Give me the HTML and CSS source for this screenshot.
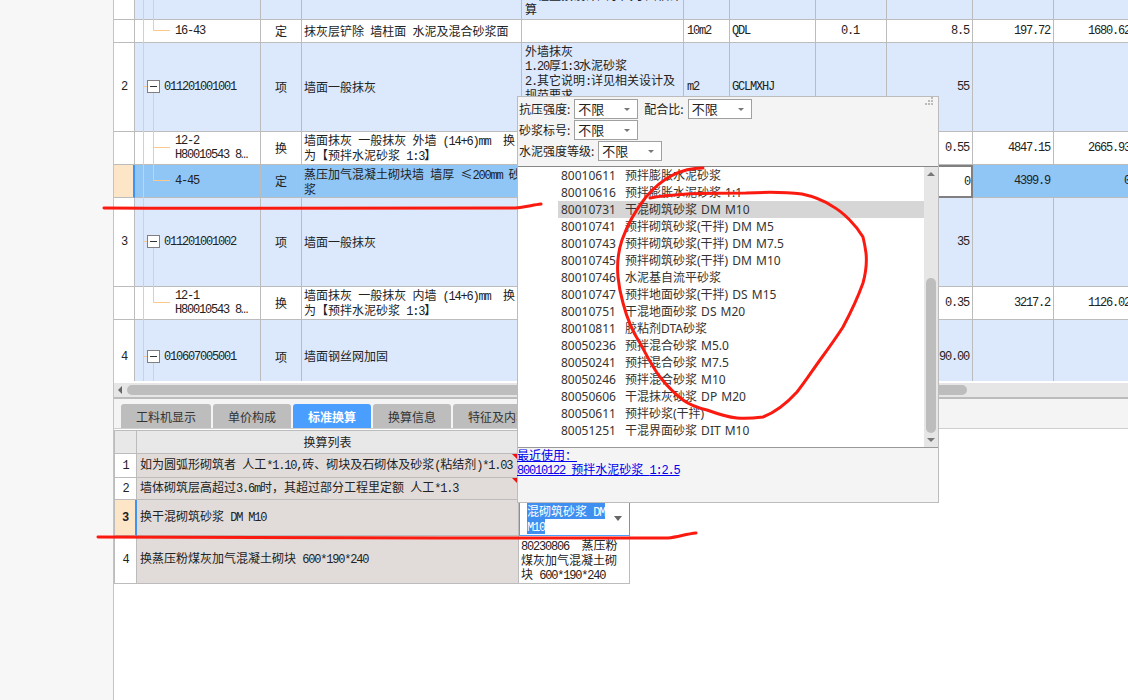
FILE: index.html
```html
<!DOCTYPE html>
<html lang="zh-CN">
<head>
    <meta charset="UTF-8">
    <title>分部分项</title>
    <link rel="stylesheet" href="styles.css">
</head>
<body>
<div class="app">
    <div class="bill-wrap">
        <table class="bill">
            <colgroup>
                <col class="c-no"><col class="c-code"><col class="c-type"><col class="c-name"><col class="c-feat">
                <col class="c-unit"><col class="c-expr"><col class="c-rate"><col class="c-qty"><col class="c-price"><col class="c-total">
            </colgroup>
            <tr class="r-clip item">
                <td class="no"></td><td></td><td></td><td></td>
                <td><div class="clip">工程量按设计图示尺寸面积计<br>算</div></td>
                <td></td><td></td><td></td><td></td><td></td><td></td>
            </tr>
            <tr class="r-sub">
                <td class="no"></td>
                <td class="code lv2 en">16-43</td>
                <td class="type">定</td>
                <td class="name">抹灰层铲除 墙柱面 水泥及混合砂浆面</td>
                <td></td>
                <td class="unit en">10m2</td>
                <td class="expr en">QDL</td>
                <td class="ctr en">0.1</td>
                <td class="num en">8.5</td>
                <td class="num en">197.72</td>
                <td class="num en">1680.62</td>
            </tr>
            <tr class="r-item item">
                <td class="no en">2</td>
                <td class="code lv1 en">011201001001</td>
                <td class="type">项</td>
                <td class="name">墙面一般抹灰</td>
                <td class="feat">外墙抹灰<br><span class="en">1.20</span>厚<span class="en">1:3</span>水泥砂浆<br><span class="en">2.</span>其它说明<span class="en">:</span>详见相关设计及<br>规范要求</td>
                <td class="unit en">m2</td>
                <td class="expr en">GCLMXHJ</td>
                <td></td>
                <td class="num en">55</td>
                <td></td><td></td>
            </tr>
            <tr class="r-two">
                <td class="no"></td>
                <td class="code lv2 en">12-2<br>H80010543 8…</td>
                <td class="type">换</td>
                <td class="name">墙面抹灰 一般抹灰 外墙 <span class="en">(14+6)mm</span>&nbsp; 换<br>为【预拌水泥砂浆 <span class="en">1:3</span>】</td>
                <td></td><td></td><td></td><td></td>
                <td class="num en">0.55</td>
                <td class="num en">4847.15</td>
                <td class="num en">2665.93</td>
            </tr>
            <tr class="r-two current">
                <td class="no"></td>
                <td class="code lv2 en">4-45</td>
                <td class="type">定</td>
                <td class="name">蒸压加气混凝土砌块墙 墙厚 ≤<span class="en">200mm</span> 砂<br>浆</td>
                <td></td><td></td><td></td><td></td>
                <td class="num en editing">0</td>
                <td class="num en">4399.9</td>
                <td class="num en">0</td>
            </tr>
            <tr class="r-item item">
                <td class="no en">3</td>
                <td class="code lv1 en">011201001002</td>
                <td class="type">项</td>
                <td class="name">墙面一般抹灰</td>
                <td></td><td></td><td></td><td></td>
                <td class="num en">35</td>
                <td></td><td></td>
            </tr>
            <tr class="r-two">
                <td class="no"></td>
                <td class="code lv2 en">12-1<br>H80010543 8…</td>
                <td class="type">换</td>
                <td class="name">墙面抹灰 一般抹灰 内墙 <span class="en">(14+6)mm</span>&nbsp; 换<br>为【预拌水泥砂浆 <span class="en">1:3</span>】</td>
                <td></td><td></td><td></td><td></td>
                <td class="num en">0.35</td>
                <td class="num en">3217.2</td>
                <td class="num en">1126.02</td>
            </tr>
            <tr class="r-last item">
                <td class="no en">4</td>
                <td class="code lv1 en">010607005001</td>
                <td class="type">项</td>
                <td class="name">墙面钢丝网加固</td>
                <td></td><td></td><td></td><td></td>
                <td class="num en">90.00</td>
                <td></td><td></td>
            </tr>
        </table>

        <!-- tree connectors, viewBox is in page coordinates -->
        <svg class="tree" width="146" height="381" viewBox="114 0 146 381">
            <g stroke="#fcc98d" fill="none">
                <path d="M143.5 0V381"/>
                <path d="M153.5 0V30.5H170"/>
                <path d="M143.5 86.5H147M153.5 92V180.5H170M153.5 147.5H170"/>
                <path d="M143.5 241.5H147M153.5 247V302.5H170"/>
                <path d="M143.5 356.5H147M153.5 362V381"/>
            </g>
            <g fill="#fff" stroke="#808080">
                <rect x="147.5" y="80.5" width="12" height="12"/>
                <rect x="147.5" y="235.5" width="12" height="12"/>
                <rect x="147.5" y="350.5" width="12" height="12"/>
            </g>
            <path d="M150 86.5h7M150 241.5h7M150 356.5h7" stroke="#333"/>
        </svg>
    </div>

    <div class="hscroll">
        <span class="arrow-left"></span>
        <span class="hthumb"></span>
    </div>

    <div class="tabs">
        <div class="tab w90">工料机显示</div>
        <div class="tab">单价构成</div>
        <div class="tab active">标准换算</div>
        <div class="tab">换算信息</div>
        <div class="tab w90">特征及内容</div>
    </div>

    <table class="convert">
        <colgroup><col class="k-no"><col class="k-name"><col class="k-val"></colgroup>
        <tr class="k-head">
            <td class="k-blank"></td>
            <td class="k-title">换算列表</td>
            <td></td>
        </tr>
        <tr class="k1">
            <td class="k-num en">1</td>
            <td class="k-text note">如为圆弧形砌筑者 人工<span class="en">*1.10,</span>砖、砌块及石砌体及砂浆<span class="en">(</span>粘结剂<span class="en">)*1.03</span></td>
            <td></td>
        </tr>
        <tr class="k2">
            <td class="k-num en">2</td>
            <td class="k-text note">墙体砌筑层高超过<span class="en">3.6m</span>时，其超过部分工程里定额 人工<span class="en">*1.3</span></td>
            <td></td>
        </tr>
        <tr class="k3">
            <td class="k-num en now">3</td>
            <td class="k-text">换干混砌筑砂浆 <span class="en">DM M10</span></td>
            <td class="k-edit">
                <span class="picked">混砌筑砂浆 <span class="en">DM</span><br><span class="en">M10</span></span>
                <span class="arrow-down"></span>
            </td>
        </tr>
        <tr class="k4">
            <td class="k-num en">4</td>
            <td class="k-text">换蒸压粉煤灰加气混凝土砌块 <span class="en">600*190*240</span></td>
            <td class="k-val-text"><span class="en">80230806</span>&nbsp; 蒸压粉<br>煤灰加气混凝土砌<br>块 <span class="en">600*190*240</span></td>
        </tr>
    </table>

    <div class="picker">
        <svg class="grip" width="8" height="8">
            <g fill="#bbb">
                <rect x="6" y="0" width="2" height="2"/><rect x="3" y="3" width="2" height="2"/><rect x="6" y="3" width="2" height="2"/>
                <rect x="0" y="6" width="2" height="2"/><rect x="3" y="6" width="2" height="2"/><rect x="6" y="6" width="2" height="2"/>
            </g>
        </svg>
        <div class="filters">
            <div class="filter-row">
                <label class="f-label">抗压强度:</label>
                <div class="sel">不限<span class="sel-arrow"></span></div>
                <label class="f-label f-gap">配合比:</label>
                <div class="sel">不限<span class="sel-arrow"></span></div>
            </div>
            <div class="filter-row">
                <label class="f-label">砂浆标号:</label>
                <div class="sel">不限<span class="sel-arrow"></span></div>
            </div>
            <div class="filter-row">
                <label class="f-label">水泥强度等级:</label>
                <div class="sel">不限<span class="sel-arrow"></span></div>
            </div>
        </div>
        <div class="list">
            <div class="items">
                <div class="it"><b>80010611</b>预拌膨胀水泥砂浆</div>
                <div class="it"><b>80010616</b>预拌膨胀水泥砂浆 1:1</div>
                <div class="it on"><b>80010731</b>干混砌筑砂浆 DM M10</div>
                <div class="it"><b>80010741</b>预拌砌筑砂浆(干拌) DM M5</div>
                <div class="it"><b>80010743</b>预拌砌筑砂浆(干拌) DM M7.5</div>
                <div class="it"><b>80010745</b>预拌砌筑砂浆(干拌) DM M10</div>
                <div class="it"><b>80010746</b>水泥基自流平砂浆</div>
                <div class="it"><b>80010747</b>预拌地面砂浆(干拌) DS M15</div>
                <div class="it"><b>80010751</b>干混地面砂浆 DS M20</div>
                <div class="it"><b>80010811</b>胶粘剂DTA砂浆</div>
                <div class="it"><b>80050236</b>预拌混合砂浆 M5.0</div>
                <div class="it"><b>80050241</b>预拌混合砂浆 M7.5</div>
                <div class="it"><b>80050246</b>预拌混合砂浆 M10</div>
                <div class="it"><b>80050606</b>干混抹灰砂浆 DP M20</div>
                <div class="it"><b>80050611</b>预拌砂浆(干拌)</div>
                <div class="it"><b>80051251</b>干混界面砂浆 DIT M10</div>
            </div>
            <div class="vscroll">
                <span class="arrow-up"></span>
                <span class="vthumb"></span>
                <span class="arrow-dn"></span>
            </div>
        </div>
        <div class="recent">
            <a class="recent-link">最近使用：</a>
            <a class="recent-link"><span class="en">80010122</span> 预拌水泥砂浆 <span class="en">1:2.5</span></a>
        </div>
    </div>
</div>

<!-- hand drawn red marks on top of everything -->
<svg class="marks" width="1128" height="700">
    <g fill="none" stroke="#fb1a10" stroke-width="3" stroke-linecap="round" stroke-linejoin="round">
        <path d="M104 208C250 209 400 209 515 208C525 207 533 205 541 204"/>
        <path d="M98 537C280 537 480 539 668 538C678 537 686 534 696 533"/>
        <path d="M703 168C680 168 662 178 646 197C634 212 627 226 622 240C617 255 617 266 618 277C619 288 621 296 623 303C628 322 634 334 640 343C647 356 653 368 660 377C668 387 675 394 683 400C690 405 698 408 707 410C718 414 727 417 737 418C746 419 755 418 763 417C776 412 787 403 797 392C805 382 812 371 820 360C828 349 836 338 843 327C851 312 858 297 863 283C866 272 867 262 866 253C865 246 864 241 863 237C856 225 843 212 832 206C826 202 816 197 802 194C785 192 765 192 746 193C720 193 700 193 687 194C672 195 660 196 650 198"/>
    </g>
</svg>
</body>
</html>
```

FILE: styles.css
```css
body {
    margin: 0;
    width: 1128px;
    height: 700px;
    overflow: hidden;
    position: relative;
    background-color: #f7f7f7;
    color: #222;
    font-family: "Noto Sans CJK SC", "Liberation Sans", sans-serif;
    font-size: 12px;
    line-height: 14px;
    word-spacing: 3.5px;
}
table {
    border-collapse: separate;
    border-spacing: 0;
    table-layout: fixed;
}
td {
    box-sizing: border-box;
    padding: 0;
    overflow: hidden;
    white-space: nowrap;
    border-right: 1px solid #bcbcbc;
    border-bottom: 1px solid #bcbcbc;
}
/* latin text in the grids is a narrow fixed pitch */
.en {
    font-family: "Liberation Mono", monospace;
    font-size: 12px;
    letter-spacing: -1.2px;
    word-spacing: 0;
}
span.en { line-height: 1; }

.app {
    position: relative;
    height: 700px;
    margin-left: 113px;
    border-left: 1px solid #c4c4c4;
    background-color: #fff;
}

/* upper grid */
.bill-wrap {
    position: relative;
    height: 381px;
    overflow: hidden;
}
.bill {
    width: 1020px;
    background-color: #fff;
}
.c-no { width: 21px; }
.c-code { width: 126px; }
.c-type { width: 41px; }
.c-name { width: 220px; }
.c-feat { width: 162px; }
.c-unit { width: 46px; }
.c-expr { width: 86px; }
.c-rate { width: 71px; }
.c-qty { width: 86px; }
.c-price { width: 81px; }
.c-total { width: 80px; }

.r-clip { height: 20px; }
.r-sub { height: 23px; }
.r-item { height: 89px; }
.r-two { height: 33px; }
.r-last { height: 74px; }
.r-item td { padding-bottom: 1px; }
.r-last .name { padding-bottom: 2px; }
.item td { background-color: #dce9fd; }
.item td.no {
    background-color: #fff;
    padding-bottom: 0;
}
.current td { background-color: #90c6f6; }
.current td.no {
    background-color: #fde6c8;
    border-right: 2px solid #3f93f5;
}
.current td.editing {
    background-color: #fff;
    border: 2px solid #808080;
    padding-right: 1px;
}
.clip {
    box-sizing: border-box;
    height: 19px;
    padding: 0 0 3px 3px;
    overflow: hidden;
    display: flex;
    flex-direction: column;
    justify-content: flex-end;
    white-space: nowrap;
}
.no { text-align: center; }
.lv1 { padding-left: 29px; }
.lv2 { padding-left: 40px; }
.type { text-align: center; }
.name { padding-left: 2px; }
td.feat {
    vertical-align: top;
    padding: 1px 0 0 3px;
}
.unit { padding-left: 3px; }
.expr { padding-left: 2px; }
.ctr {
    text-align: center;
    padding-right: 2px;
}
.num {
    text-align: right;
    padding-right: 3px;
}
.tree {
    position: absolute;
    left: 0;
    top: 0;
}

/* horizontal scrollbar */
.hscroll {
    display: flex;
    align-items: center;
    box-sizing: border-box;
    height: 16px;
    margin-top: 2px;
    padding-left: 4px;
    background-color: #e6e6e6;
    border-bottom: 2px solid #bcbcbc;
}
.arrow-left {
    width: 0;
    height: 0;
    border-top: 4px solid transparent;
    border-bottom: 4px solid transparent;
    border-right: 4px solid #666;
}
.hthumb {
    width: 840px;
    height: 10px;
    margin-left: 5px;
    border-radius: 5px;
    background-color: #bdbdbd;
}

/* tab strip */
.tabs {
    display: flex;
    gap: 2px;
    box-sizing: border-box;
    height: 30px;
    padding: 5px 0 0 7px;
    background-color: #f4f4f4;
    border-bottom: 1px solid #cfcfcf;
}
.tab {
    width: 78px;
    height: 24px;
    line-height: 25px;
    text-align: center;
    color: #333;
    background-color: #bdbdbd;
    border-radius: 3px 3px 0 0;
}
.w90 { width: 90px; }
.active {
    color: #fff;
    font-weight: bold;
    background-color: #4a9eff;
}

/* conversion list */
.convert {
    width: 516px;
    margin-top: 1px;
}
.k-no { width: 23px; }
.k-name { width: 382px; }
.k-val { width: 111px; }
.k-head { height: 24px; }
.k1 { height: 24px; }
.k2 { height: 22px; }
.k3 { height: 36px; }
.k4 { height: 48px; }
.k-blank,
.k-title {
    background-color: #e8e8e8;
    text-align: center;
}
.convert td:first-child { border-left: 1px solid #bcbcbc; }
.k-head td { border-top: 1px solid #bcbcbc; }
.k-num { text-align: center; }
.k-text {
    position: relative;
    padding: 0 0 2px 3px;
    background-color: #e1dcd9;
}
.now {
    background-color: #fde6c8;
    border-right: 2px solid #3f93f5;
    font-weight: bold;
}
/* comment marker in the corner of a cell */
.note::after {
    content: "";
    position: absolute;
    top: 0;
    right: 0;
    border-top: 6px solid #f01010;
    border-left: 6px solid transparent;
}
.k-edit {
    position: relative;
    padding: 3px 0 0 7px;
    vertical-align: top;
    border: 1px solid #4a9eff;
}
.picked {
    color: #fff;
    background-color: #3f8ff0;
    line-height: 14px;
}
.arrow-down {
    position: absolute;
    top: 15px;
    right: 7px;
    border-top: 5px solid #666;
    border-left: 4px solid transparent;
    border-right: 4px solid transparent;
}
.k-val-text { padding-left: 2px; }

/* material picker dropped over the grid */
.picker {
    position: absolute;
    left: 403px;
    top: 96px;
    box-sizing: border-box;
    width: 422px;
    height: 407px;
    background-color: #f4f4f4;
    border: 1px solid #bcbcbc;
}
.grip {
    position: absolute;
    top: 0;
    right: 5px;
}
.filters {
    display: flex;
    flex-direction: column;
    gap: 1px;
    box-sizing: border-box;
    height: 69px;
    padding: 2px 0 0 1px;
}
.filter-row {
    display: flex;
    align-items: center;
    height: 20px;
}
.f-label { margin-right: 4px; }
.f-gap {
    margin-left: 6px;
    margin-right: 4px;
}
.sel {
    position: relative;
    box-sizing: border-box;
    width: 64px;
    height: 20px;
    padding-left: 3px;
    line-height: 18px;
    font-size: 13px;
    background-color: #fff;
    border: 1px solid #a0a0a0;
}
.sel-arrow {
    position: absolute;
    top: 8px;
    right: 7px;
    border-top: 3px solid #777;
    border-left: 3px solid transparent;
    border-right: 3px solid transparent;
}
.list {
    display: flex;
    height: 282px;
    box-sizing: border-box;
    background-color: #fff;
    border-top: 1px solid #888;
    border-bottom: 1px solid #999;
}
.items {
    flex: 1;
    padding-left: 40px;
    font-family: "Noto Sans", "Noto Sans CJK SC", sans-serif;
    color: #333;
    word-spacing: 1px;
}
.it {
    height: 17px;
    line-height: 17px;
    padding-left: 3px;
    white-space: nowrap;
}
.it b {
    display: inline-block;
    width: 64px;
    font-weight: normal;
}
.on { background-color: #d6d6d6; }
.vscroll {
    display: flex;
    flex-direction: column;
    align-items: center;
    width: 14px;
    padding-top: 5px;
    box-sizing: border-box;
    background-color: #e6e6e6;
}
.arrow-up {
    border-bottom: 4px solid #777;
    border-left: 4px solid transparent;
    border-right: 4px solid transparent;
}
.vthumb {
    width: 10px;
    height: 155px;
    margin-top: 102px;
    border-radius: 5px;
    background-color: #bdbdbd;
}
.arrow-dn {
    margin-top: 5px;
    border-top: 4px solid #777;
    border-left: 4px solid transparent;
    border-right: 4px solid transparent;
}
.recent {
    display: flex;
    flex-direction: column;
    align-items: flex-start;
    margin-left: -1px;
}
.recent-link {
    text-decoration: underline;
    color: #0000ee;
}

.marks {
    position: absolute;
    left: 0;
    top: 0;
    pointer-events: none;
}
```
